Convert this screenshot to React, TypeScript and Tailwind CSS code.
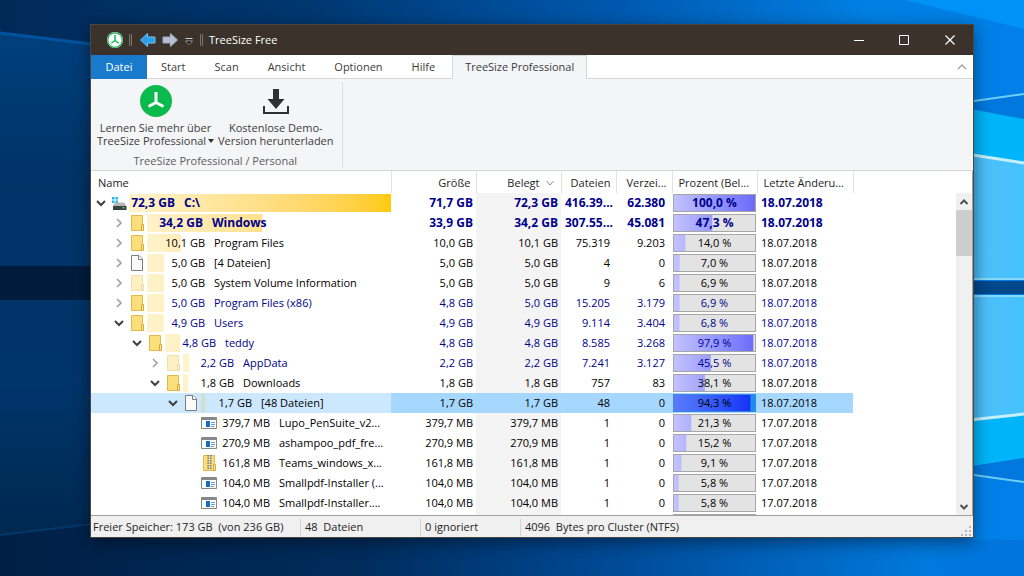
import React from 'react';

type Kind = 'drive' | 'folder' | 'hidden' | 'file' | 'app' | 'zip' | 'none';

type Row = {
  level: number;
  kind: Kind;
  open?: boolean;
  bold?: boolean;
  blue?: boolean;
  selected?: boolean;
  share: number;
  name: string;
  size: string;
  used: string;
  files: string;
  dirs: string;
  percent: number;
  date: string;
};

const rows: Row[] = [
  { level: 0, kind: 'drive', open: true, bold: true, blue: true, share: 100, name: 'C:\\', size: '71,7 GB', used: '72,3 GB', files: '416.39...', dirs: '62.380', percent: 100, date: '18.07.2018' },
  { level: 1, kind: 'folder', open: false, bold: true, blue: true, share: 47.3, name: 'Windows', size: '33,9 GB', used: '34,2 GB', files: '307.55...', dirs: '45.081', percent: 47.3, date: '18.07.2018' },
  { level: 1, kind: 'folder', open: false, share: 14, name: 'Program Files', size: '10,0 GB', used: '10,1 GB', files: '75.319', dirs: '9.203', percent: 14, date: '18.07.2018' },
  { level: 1, kind: 'file', open: false, share: 7, name: '[4 Dateien]', size: '5,0 GB', used: '5,0 GB', files: '4', dirs: '0', percent: 7, date: '18.07.2018' },
  { level: 1, kind: 'hidden', open: false, share: 6.9, name: 'System Volume Information', size: '5,0 GB', used: '5,0 GB', files: '9', dirs: '6', percent: 6.9, date: '18.07.2018' },
  { level: 1, kind: 'folder', open: false, blue: true, share: 6.9, name: 'Program Files (x86)', size: '4,8 GB', used: '5,0 GB', files: '15.205', dirs: '3.179', percent: 6.9, date: '18.07.2018' },
  { level: 1, kind: 'folder', open: true, blue: true, share: 6.8, name: 'Users', size: '4,9 GB', used: '4,9 GB', files: '9.114', dirs: '3.404', percent: 6.8, date: '18.07.2018' },
  { level: 2, kind: 'folder', open: true, blue: true, share: 6.6, name: 'teddy', size: '4,8 GB', used: '4,8 GB', files: '8.585', dirs: '3.268', percent: 97.9, date: '18.07.2018' },
  { level: 3, kind: 'hidden', open: false, blue: true, share: 3, name: 'AppData', size: '2,2 GB', used: '2,2 GB', files: '7.241', dirs: '3.127', percent: 45.5, date: '18.07.2018' },
  { level: 3, kind: 'folder', open: true, share: 2.5, name: 'Downloads', size: '1,8 GB', used: '1,8 GB', files: '757', dirs: '83', percent: 38.1, date: '18.07.2018' },
  { level: 4, kind: 'file', open: true, selected: true, share: 2.3, name: '[48 Dateien]', size: '1,7 GB', used: '1,7 GB', files: '48', dirs: '0', percent: 94.3, date: '18.07.2018' },
  { level: 5, kind: 'app', share: 0.5, name: 'Lupo_PenSuite_v2...', size: '379,7 MB', used: '379,7 MB', files: '1', dirs: '0', percent: 21.3, date: '17.07.2018' },
  { level: 5, kind: 'app', share: 0.4, name: 'ashampoo_pdf_fre...', size: '270,9 MB', used: '270,9 MB', files: '1', dirs: '0', percent: 15.2, date: '17.07.2018' },
  { level: 5, kind: 'zip', share: 0, name: 'Teams_windows_x...', size: '161,8 MB', used: '161,8 MB', files: '1', dirs: '0', percent: 9.1, date: '17.07.2018' },
  { level: 5, kind: 'app', share: 0, name: 'Smallpdf-Installer (...', size: '104,0 MB', used: '104,0 MB', files: '1', dirs: '0', percent: 5.8, date: '17.07.2018' },
  { level: 5, kind: 'app', share: 0, name: 'Smallpdf-Installer....', size: '104,0 MB', used: '104,0 MB', files: '1', dirs: '0', percent: 5.8, date: '17.07.2018' },
];

const indents = ['pl-1', 'pl-[22px]', 'pl-10', 'pl-[58px]', 'pl-[76px]', 'pl-[94px]'];
const sizeWidths = ['w-[46px]', 'w-[58px]', 'w-[51px]', 'w-[51px]', 'w-[51px]', 'w-[51px]'];

const formatPercent = (value: number) => `${value.toFixed(1).replace('.', ',')} %`;

const Wallpaper = () => (
  <svg className="absolute inset-0 h-full w-full" viewBox="0 0 1024 576" preserveAspectRatio="none" aria-hidden="true">
    <defs>
      <linearGradient id="sky" x1="0" x2="1" y1="0" y2="0">
        <stop offset="0" stopColor="#002a58" />
        <stop offset="0.3" stopColor="#00376f" />
        <stop offset="0.6" stopColor="#0058ae" />
        <stop offset="0.85" stopColor="#0080e4" />
        <stop offset="1" stopColor="#0080e8" />
      </linearGradient>
      <linearGradient id="left" x1="0" x2="0" y1="0" y2="1">
        <stop offset="0" stopColor="#003f7c" />
        <stop offset="0.3" stopColor="#003366" />
        <stop offset="0.7" stopColor="#00356a" />
        <stop offset="1" stopColor="#002850" />
      </linearGradient>
      <linearGradient id="pane" x1="0" x2="1" y1="0" y2="0">
        <stop offset="0" stopColor="#3aaae4" />
        <stop offset="0.4" stopColor="#4dc0fa" />
        <stop offset="1" stopColor="#45c2ff" />
      </linearGradient>
      <linearGradient id="floor" x1="0" x2="1" y1="0" y2="0">
        <stop offset="0" stopColor="#001f45" />
        <stop offset="0.35" stopColor="#002c5c" />
        <stop offset="0.6" stopColor="#004a96" />
        <stop offset="0.9" stopColor="#0078dc" />
        <stop offset="1" stopColor="#0074dc" />
      </linearGradient>
    </defs>
    <rect width="1024" height="576" fill="url(#sky)" />
    <path d="M0 33 L100 45 V535 L0 535Z" fill="url(#left)" />
    <path d="M0 33 L100 45" stroke="#00549f" strokeWidth="3" />
    <path d="M0 266 H100 V300 H0Z" fill="#001c3d" />
    <path d="M0 535 L100 523 L600 532 L1024 540 V576 H0Z" fill="url(#floor)" />
    <path d="M0 535 L100 523" stroke="#00386c" strokeWidth="2" />
    <path d="M905 0 L1024 29 V0Z" fill="#0092f6" />
    <path d="M960 103 L1024 94 V120 L960 108Z" fill="#0078dd" />
    <path d="M960 107 L1024 119 V163 L960 152Z" fill="#00b4fa" />
    <path d="M960 153 L1024 163 V278 H960Z" fill="url(#pane)" />
    <path d="M960 281 H1024 V294 H960Z" fill="#00478c" />
    <path d="M960 296 H1024 V414 L960 421Z" fill="url(#pane)" />
    <path d="M960 421 L1024 414 V458 L960 468Z" fill="#00b4fa" />
    <path d="M960 468 L1024 458 V482 L960 474Z" fill="#0078dd" />
    <path d="M960 279 H1024 M960 296 H1024" stroke="#86daf8" strokeWidth="2" />
    <path d="M960 103 L1024 94 M960 473 L1024 482" stroke="#6bcff5" strokeWidth="2" />
    <path d="M960 153 L1024 163 M960 421 L1024 414" stroke="#c5f0fb" strokeWidth="3" />
  </svg>
);

const LogoMark = ({ className, outlined }: { className: string; outlined?: boolean }) => (
  <svg className={className} viewBox="0 0 32 32" aria-hidden="true">
    <circle cx="16" cy="16" r="16" fill={outlined ? '#ffffff' : '#0bba4d'} />
    {outlined && <circle cx="16" cy="16" r="14.5" fill="none" stroke="#17b455" strokeWidth="2.5" />}
    <path
      d={outlined ? 'M16 6V17M16 17L8.5 22.5M16 17L23.5 22.5' : 'M16 7V17.5M16 17.5L8.5 21.5M16 17.5L23.5 21.5'}
      fill="none"
      stroke={outlined ? '#17b455' : '#ffffff'}
      strokeWidth="3"
    />
  </svg>
);

const Arrow = ({ flip }: { flip?: boolean }) => (
  <svg className="h-4 w-4" viewBox="0 0 16 16" aria-hidden="true">
    <path
      d={flip ? 'M15.5 8L8.5 1.5V5H1V11H8.5V14.5Z' : 'M0.5 8L7.5 1.5V5H15V11H7.5V14.5Z'}
      fill={flip ? '#b4bed2' : '#2b9eea'}
      stroke={flip ? '#a4aec4' : '#6cc4f8'}
      strokeWidth="1"
    />
  </svg>
);

const Divider = () => <span className="h-3 w-[3px] border-x border-[#7b756e]" />;

const Chevron = ({ open }: { open?: boolean }) => (
  <svg className="h-3 w-3 shrink-0" viewBox="0 0 12 12" fill="none" aria-hidden="true">
    {open === true && <path d="M2 4L6 8L10 4" stroke="#404040" strokeWidth="2" />}
    {open === false && <path d="M4 2L8 6L4 10" stroke="#a0a0a0" strokeWidth="1.6" />}
  </svg>
);

const ItemIcon = ({ kind }: { kind: Kind }) => (
  <svg className="h-[18px] w-4 shrink-0" viewBox="0 0 16 18" aria-hidden="true">
    {kind === 'drive' && (
      <>
        <path d="M1 3H3.5V5.5H1ZM4.5 3H7V5.5H4.5ZM1 6.5H3.5V9H1ZM4.5 6.5H7V9H4.5Z" fill="#23b6e8" />
        <path d="M4 8.5H13L15.5 12H2Z" fill="#b4b6b8" />
        <rect x="2" y="12" width="13.5" height="4" fill="#3d4043" />
        <rect x="11.5" y="13" width="2" height="1.5" fill="#41d35c" />
      </>
    )}
    {(kind === 'folder' || kind === 'hidden') && (
      <g opacity={kind === 'hidden' ? 0.45 : 1}>
        <path d="M2.5 1.5H13.5V16.5H2.5Z" fill="#fbdf7c" stroke="#e3b94c" />
        <path d="M12.5 10.5H14.5V16.5H12.5Z" fill="#fde69a" stroke="#dba935" />
      </g>
    )}
    {kind === 'file' && (
      <>
        <path d="M2.5 1.5H10L13.5 5V16.5H2.5Z" fill="#fafafa" stroke="#7d7d7d" />
        <path d="M9.5 1.5V5.5H13.5" fill="#ffffff" stroke="#7d7d7d" />
      </>
    )}
    {kind === 'app' && (
      <>
        <path d="M0.5 3.5H15.5V14.5H0.5Z" fill="#ffffff" stroke="#82888d" />
        <path d="M1 4H15V6H1Z" fill="#82888d" />
        <rect x="5" y="7" width="4" height="6" fill="#0f6fc6" />
        <path d="M10 8.5H14M10 10.5H14M10 12.5H13" stroke="#7a9bbd" />
      </>
    )}
    {kind === 'zip' && (
      <>
        <path d="M2.5 1.5H13.5V16.5H2.5Z" fill="#fbdf7c" stroke="#e3b94c" />
        <path d="M12.5 10.5H14.5V16.5H12.5Z" fill="#fde69a" stroke="#dba935" />
        <path d="M8.5 1V16" stroke="#67645a" strokeWidth="4" strokeDasharray="1.5 1" />
        <path d="M8.5 1V16" stroke="#d8d4c6" strokeWidth="1.5" />
      </>
    )}
  </svg>
);

const PercentBar = ({ value, selected }: { value?: number; selected?: boolean }) => (
  <div
    className={`relative mx-px flex h-[18px] items-center justify-center border ${
      selected ? 'border-[#3a86d8] bg-[#1a8eee]' : 'border-[#a6a6a6] bg-[#e3e3e3]'
    }`}
  >
    <div
      className={`absolute inset-0 bg-linear-to-r ${
        selected ? 'from-[#5a7bff] to-[#1429f5]' : 'from-[#c4c2ff] to-[#6c69fb]'
      }`}
      style={{ clipPath: `inset(0 ${100 - (value ?? 0)}% 0 0)` }}
    />
    {value !== undefined && <span className="relative">{formatPercent(value)}</span>}
  </div>
);

const TreeRow = ({ row }: { row: Row }) => {
  const tone = row.blue ? 'text-[#00008b]' : 'text-black';
  const cell = row.selected ? 'bg-[#a6d8ff]' : '';
  const sizeWidth = row.bold && row.level === 1 ? 'w-[56px]' : sizeWidths[row.level];
  return (
    <tr className={`h-5 whitespace-nowrap ${tone} ${row.bold ? 'text-xs leading-4 font-bold' : ''}`}>
      <td className="p-0">
        <div className={`flex h-5 items-center ${indents[row.level]} ${row.selected ? 'bg-[#cce8ff]' : ''}`}>
          <Chevron open={row.open} />
          <span className="ml-1">
            <ItemIcon kind={row.kind} />
          </span>
          <div className="relative ml-0.5 flex h-[18px] min-w-0 flex-1 items-center gap-[9px]">
            <div
              className={`absolute inset-0 bg-linear-to-r ${
                row.selected ? 'from-[#cfdfd0] to-[#cfdfd0]' : 'from-[#fff3cc] to-[#ffca00]'
              }`}
              style={{ clipPath: `inset(0 ${100 - row.share}% 0 0)` }}
            />
            <span className={`relative shrink-0 text-right ${sizeWidth}`}>{row.used}</span>
            <span className="relative">{row.name}</span>
          </div>
        </div>
      </td>
      <td className={`p-0 pr-[3px] text-right ${cell}`}>{row.size}</td>
      <td className={`p-0 pr-[3px] text-right ${cell || 'bg-[#f4f4f4]'}`}>{row.used}</td>
      <td className={`p-0 text-right ${row.bold ? 'pr-[3px]' : 'pr-1.5'} ${cell}`}>{row.files}</td>
      <td className={`p-0 pr-[7px] text-right ${cell}`}>{row.dirs}</td>
      <td className={`p-0 ${cell}`}>
        <PercentBar value={row.percent} selected={row.selected} />
      </td>
      <td className={`p-0 pl-1 text-left ${cell}`}>{row.date}</td>
      <td className="p-0" />
    </tr>
  );
};

const TitleBar = () => (
  <header className="flex h-[30px] shrink-0 items-center bg-[#3b332b] text-[11px] text-white">
    <div className="flex flex-1 items-center pl-4">
      <LogoMark className="h-4 w-4" outlined />
      <div className="ml-1.5 flex items-center gap-2">
        <Divider />
        <div className="flex items-center gap-1.5">
          <button type="button" aria-label="Zurück">
            <Arrow />
          </button>
          <button type="button" aria-label="Vorwärts">
            <Arrow flip />
          </button>
          <button type="button" aria-label="Symbolleiste anpassen">
            <svg className="h-2.5 w-2.5" viewBox="0 0 10 10" aria-hidden="true">
              <path d="M1.5 3.5H8.5" stroke="#d0ccc8" />
              <path d="M1.5 6H8.5L5 9.5Z" fill="#000000" stroke="#d0ccc8" strokeWidth="0.7" />
            </svg>
          </button>
        </div>
      </div>
      <div className="ml-1.5 flex items-center gap-1.5">
        <Divider />
        <h1>TreeSize Free</h1>
      </div>
    </div>
    <button type="button" aria-label="Minimieren" className="flex h-full w-[46px] items-center justify-center">
      <svg className="h-3 w-3" viewBox="0 0 12 12" aria-hidden="true">
        <path d="M2 6.5H12" stroke="#ffffff" />
      </svg>
    </button>
    <button type="button" aria-label="Maximieren" className="flex h-full w-[46px] items-center justify-center">
      <svg className="h-3 w-3" viewBox="0 0 12 12" fill="none" aria-hidden="true">
        <path d="M1.5 1.5H10.5V10.5H1.5Z" stroke="#ffffff" />
      </svg>
    </button>
    <button type="button" aria-label="Schließen" className="flex h-full w-[46px] items-center justify-center">
      <svg className="h-3 w-3" viewBox="0 0 12 12" aria-hidden="true">
        <path d="M1.5 1.5L10.5 10.5M10.5 1.5L1.5 10.5" stroke="#ffffff" strokeWidth="1.2" />
      </svg>
    </button>
  </header>
);

const tabs = ['Start', 'Scan', 'Ansicht', 'Optionen', 'Hilfe'];

const Ribbon = () => (
  <>
    <nav className="flex h-6 shrink-0 bg-white text-[11px] text-[#3c3c3c]">
      <button type="button" className="w-14 bg-[#1979ca] text-white">
        Datei
      </button>
      <div className="flex gap-px border-b border-[#d6d7d9] pt-px pr-[3px]">
        {tabs.map((tab) => (
          <button key={tab} type="button" className="px-3.5">
            {tab}
          </button>
        ))}
      </div>
      <button type="button" className="border-x border-t border-[#d6d7d9] bg-[#f4f5f7] px-3">
        TreeSize Professional
      </button>
      <div className="flex flex-1 items-center justify-end border-b border-[#d6d7d9] pr-1.5">
        <button type="button" aria-label="Menüband ausblenden">
          <svg className="h-2.5 w-2.5" viewBox="0 0 10 10" fill="none" aria-hidden="true">
            <path d="M1 7L5 3L9 7" stroke="#a0a0a0" strokeWidth="1.3" />
          </svg>
        </button>
      </div>
    </nav>
    <section className="flex h-[92px] shrink-0 border-b border-[#d6d7d9] bg-[#f4f5f7] text-[11px] leading-[13px] text-[#3c3c3c]">
      <div className="my-[3px] flex flex-col items-center justify-between border-r border-[#dcdde0] pl-1.5 pr-2">
        <div className="flex gap-1">
          <button type="button" className="flex flex-col items-center whitespace-nowrap pt-[3px]">
            <LogoMark className="mb-1 h-8 w-8" />
            <span>Lernen Sie mehr über</span>
            <span className="flex items-center gap-0.5">
              TreeSize Professional
              <svg className="h-1 w-1.5" viewBox="0 0 6 4" aria-hidden="true">
                <path d="M0 0H6L3 4Z" fill="#303030" />
              </svg>
            </span>
          </button>
          <button type="button" className="flex flex-col items-center whitespace-nowrap pt-[3px]">
            <svg className="mb-1 h-8 w-8" viewBox="0 0 32 32" aria-hidden="true">
              <path d="M13 4H19V14H24.5L16 24L7.5 14H13Z" fill="#303030" />
              <path d="M4 21V28H28V21" fill="none" stroke="#303030" strokeWidth="2" />
            </svg>
            <span>Kostenlose Demo-</span>
            <span>Version herunterladen</span>
          </button>
        </div>
        <span className="text-[#5c5c5c]">TreeSize Professional / Personal</span>
      </div>
    </section>
  </>
);

const SizeTable = () => (
  <table className="w-full table-fixed border-collapse text-[11px] leading-4">
    <colgroup>
      <col className="w-[300px]" />
      <col className="w-[85px]" />
      <col className="w-[85px]" />
      <col className="w-[55px]" />
      <col className="w-14" />
      <col className="w-[85px]" />
      <col className="w-24" />
      <col />
    </colgroup>
    <thead>
      <tr className="h-[22px] whitespace-nowrap text-[#1e1e1e] *:border-r *:border-[#e2e2e2] *:p-0 *:pt-0.5 *:font-normal">
        <th className="text-left">
          <span className="pl-[7px]">Name</span>
        </th>
        <th className="text-right">
          <span className="pr-[5px]">Größe</span>
        </th>
        <th>
          <div className="flex items-center justify-end gap-1.5 pr-[7px]">
            Belegt
            <svg className="h-2 w-2" viewBox="0 0 8 8" fill="none" aria-hidden="true">
              <path d="M0.5 2L4 6L7.5 2" stroke="#8a8a8a" />
            </svg>
          </div>
        </th>
        <th className="text-right">
          <span className="pr-[5px]">Dateien</span>
        </th>
        <th className="text-right">
          <span className="pr-[5px]">Verzei...</span>
        </th>
        <th className="text-left">
          <span className="pl-1.5">Prozent (Bel...</span>
        </th>
        <th className="text-left">
          <span className="pl-1.5">Letzte Änderu...</span>
        </th>
        <td className="border-r-0!" />
      </tr>
    </thead>
    <tbody>
      {rows.map((row, index) => (
        <TreeRow key={index} row={row} />
      ))}
      <tr className="h-5">
        <td />
        <td />
        <td className="bg-[#f4f4f4]" />
        <td />
        <td />
        <td className="p-0">
          <PercentBar />
        </td>
        <td />
        <td />
      </tr>
    </tbody>
  </table>
);

const ScrollBar = () => (
  <div className="mt-[22px] flex w-4 shrink-0 flex-col bg-[#f0f0f0]">
    <button type="button" aria-label="Nach oben" className="flex h-[17px] items-center justify-center">
      <svg className="h-2.5 w-2.5" viewBox="0 0 10 10" fill="none" aria-hidden="true">
        <path d="M1.5 7L5 3.5L8.5 7" stroke="#505050" strokeWidth="2" />
      </svg>
    </button>
    <div className="flex-1">
      <div className="h-[46px] bg-[#cdcdcd]" />
    </div>
    <button type="button" aria-label="Nach unten" className="flex h-[17px] items-center justify-center">
      <svg className="h-2.5 w-2.5" viewBox="0 0 10 10" fill="none" aria-hidden="true">
        <path d="M1.5 3L5 6.5L8.5 3" stroke="#505050" strokeWidth="2" />
      </svg>
    </button>
  </div>
);

const StatusBar = () => (
  <footer className="flex h-[22px] shrink-0 items-center whitespace-pre border-t border-[#a0a0a0] bg-[#f0f0f0] pt-0.5 text-[11px] text-[#1e1e1e]">
    <span className="w-[210px] border-r border-[#d4d4d4] pl-0.5">Freier Speicher: 173 GB  (von 236 GB)</span>
    <span className="w-[120px] border-r border-[#d4d4d4] pl-1">48  Dateien</span>
    <span className="w-[100px] border-r border-[#d4d4d4] pl-1">0 ignoriert</span>
    <span className="flex-1 pl-1">4096  Bytes pro Cluster (NTFS)</span>
    <svg className="h-3 w-3 self-end" viewBox="0 0 12 12" aria-hidden="true">
      <path d="M8 1H10V3H8ZM8 5H10V7H8ZM4 5H6V7H4ZM8 9H10V11H8ZM4 9H6V11H4ZM0 9H2V11H0Z" fill="#b8b8b8" />
    </svg>
  </footer>
);

const App: React.FC = () => {
  return (
    <div className="relative flex h-screen bg-[#00376f] pt-6 pr-[50px] pb-[38px] pl-[90px] font-['Open_Sans',sans-serif]">
      <Wallpaper />
      <main className="relative flex min-w-0 flex-1 flex-col border border-[#4a4640] bg-white shadow-[0_4px_16px_rgba(0,0,0,0.45)]">
        <TitleBar />
        <Ribbon />
        <div className="flex min-h-0 flex-1 overflow-hidden border-r border-[#a0a0a0]">
          <div className="min-w-0 flex-1 overflow-hidden">
            <SizeTable />
          </div>
          <ScrollBar />
        </div>
        <StatusBar />
      </main>
    </div>
  );
};

export default App;
